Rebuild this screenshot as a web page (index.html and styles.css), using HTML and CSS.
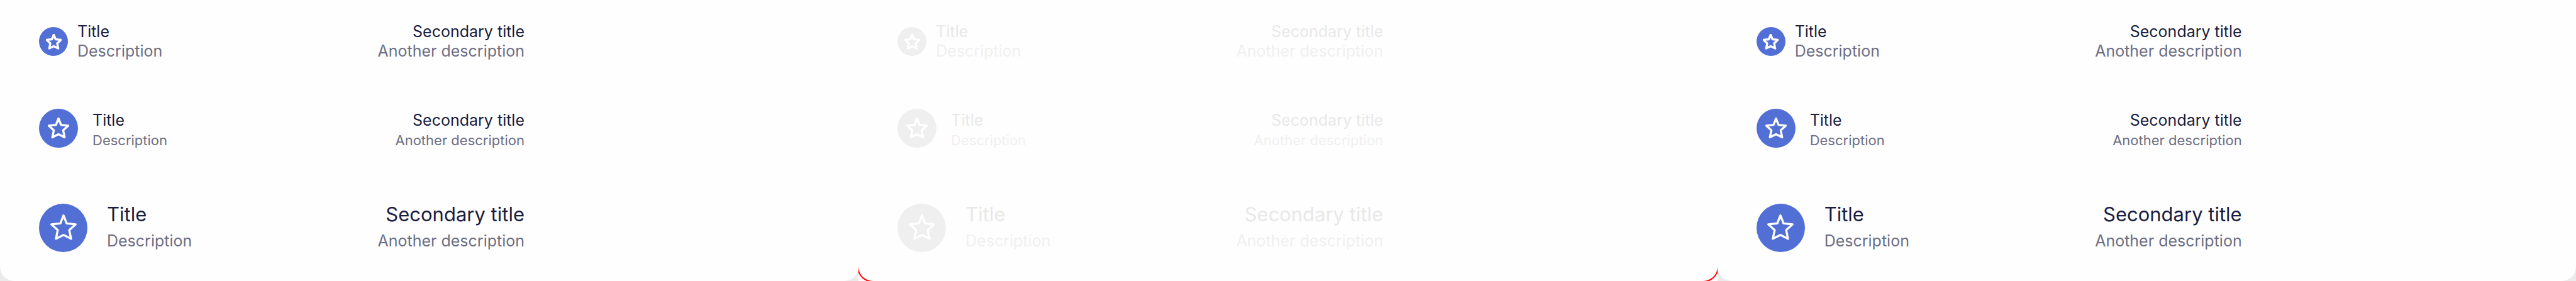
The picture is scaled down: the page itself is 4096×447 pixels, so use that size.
FILE: index.html
```html
<!DOCTYPE html>
<html lang="en">
<head>
<meta charset="utf-8">
<title>List items</title>
<link rel="stylesheet" href="styles.css">
</head>
<body>
<svg class="defs" aria-hidden="true">
  <symbol id="star" viewBox="-22 -22 44 44">
    <path vector-effect="non-scaling-stroke" stroke-width="3.4" d="M0-20.2 5.2-7 20.2-5.4 9.6 4.2 12.6 18.6 0 12.4-12.6 18.6-9.6 4.2-20.2-5.4-5.2-7Z"/>
  </symbol>
</svg>
<main class="board">
  <section class="cell">
    <ul class="panel">
      <li class="item small"><span class="badge"><svg class="star"><use href="#star"/></svg></span><div class="text"><p class="title">Title</p><p class="desc">Description</p></div><div class="text end"><p class="title">Secondary title</p><p class="desc">Another description</p></div></li>
      <li class="item medium"><span class="badge"><svg class="star"><use href="#star"/></svg></span><div class="text"><p class="title">Title</p><p class="desc">Description</p></div><div class="text end"><p class="title">Secondary title</p><p class="desc">Another description</p></div></li>
      <li class="item large"><span class="badge"><svg class="star"><use href="#star"/></svg></span><div class="text"><p class="title">Title</p><p class="desc">Description</p></div><div class="text end"><p class="title">Secondary title</p><p class="desc">Another description</p></div></li>
    </ul>
  </section>
  <section class="cell disabled">
    <ul class="panel">
      <li class="item small"><span class="badge"><svg class="star"><use href="#star"/></svg></span><div class="text"><p class="title">Title</p><p class="desc">Description</p></div><div class="text end"><p class="title">Secondary title</p><p class="desc">Another description</p></div></li>
      <li class="item medium"><span class="badge"><svg class="star"><use href="#star"/></svg></span><div class="text"><p class="title">Title</p><p class="desc">Description</p></div><div class="text end"><p class="title">Secondary title</p><p class="desc">Another description</p></div></li>
      <li class="item large"><span class="badge"><svg class="star"><use href="#star"/></svg></span><div class="text"><p class="title">Title</p><p class="desc">Description</p></div><div class="text end"><p class="title">Secondary title</p><p class="desc">Another description</p></div></li>
    </ul>
  </section>
  <section class="cell">
    <ul class="panel">
      <li class="item small"><span class="badge"><svg class="star"><use href="#star"/></svg></span><div class="text"><p class="title">Title</p><p class="desc">Description</p></div><div class="text end"><p class="title">Secondary title</p><p class="desc">Another description</p></div></li>
      <li class="item medium"><span class="badge"><svg class="star"><use href="#star"/></svg></span><div class="text"><p class="title">Title</p><p class="desc">Description</p></div><div class="text end"><p class="title">Secondary title</p><p class="desc">Another description</p></div></li>
      <li class="item large"><span class="badge"><svg class="star"><use href="#star"/></svg></span><div class="text"><p class="title">Title</p><p class="desc">Description</p></div><div class="text end"><p class="title">Secondary title</p><p class="desc">Another description</p></div></li>
    </ul>
  </section>
</main>
</body>
</html>
```
FILE: styles.css
```css
* { box-sizing: border-box; margin: 0; padding: 0; }
body { background: #fff; font-family: Inter, "Liberation Sans", sans-serif; }
.defs { display: none; }
.board { display: grid; grid-template-columns: repeat(3, 1fr); }
.cell {
  --badge: #516fd4;
  --title: #1a1d3d;
  --desc: #6d6e83;
  overflow: hidden;
  background: #ebebeb;
}
.disabled { --badge: #efefef; --title: #e8e8e8; --desc: #f0f0f0; background: #fff; }
.panel {
  list-style: none;
  padding: 0 62px;
  background: #fefefe;
  border-radius: 0 0 23px 23px;
}
.disabled .panel { box-shadow: 0 0 0 2px #f00; }
.item { display: flex; align-items: center; max-width: 772px; }
.badge {
  flex: none;
  display: grid;
  place-items: center;
  border-radius: 50%;
  background: var(--badge);
}
.star {
  fill: none;
  stroke: #fff;
  stroke-linejoin: round;
}
.end { margin-left: auto; text-align: right; }
.title { color: var(--title); font-size: 25px; line-height: 31px; }
.desc { color: var(--desc); font-size: 25px; line-height: 31px; }

.small { gap: 15px; padding: 35px 0; }
.small .badge { width: 46px; height: 46px; }
.small .star { width: 25px; height: 25px; }

.medium { gap: 23px; padding: 40px 0; }
.medium .badge { width: 62px; height: 62px; }
.medium .star { width: 34px; height: 34px; }
.medium .title { line-height: 38px; }
.medium .desc { font-size: 22px; line-height: 26px; }

.large { gap: 31px; padding: 44px 0 43px; }
.large .badge { width: 77px; height: 77px; }
.large .star { width: 42px; height: 42px; }
.large .title { font-size: 31px; line-height: 42px; }
.large .desc { line-height: 42px; }
```
